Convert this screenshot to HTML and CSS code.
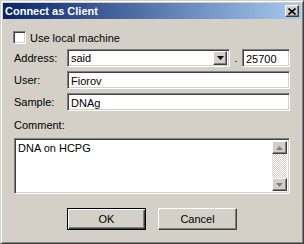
FILE: index.html
```html
<!doctype html>
<html>

<head>
    <meta charset="utf-8" />
    <title>Connect as Client</title>
    <link rel="stylesheet" href="styles.css">
</head>

<body>
    <div class="window">
        <div class="titlebar">
            <span class="title">Connect as Client</span>
            <span class="close raised">
                <svg width="8" height="7" viewBox="0 0 8 7">
                    <path d="M0.5 0.5 L7.5 6.5 M7.5 0.5 L0.5 6.5" stroke="#000" stroke-width="1.6" fill="none" />
                </svg>
            </span>
        </div>
        <div class="content">
            <div class="check-row">
                <span class="checkbox sunken"></span>
                <span>Use local machine</span>
            </div>
            <div class="fields">
                <span class="lbl">Address:</span>
                <div class="addr-row">
                    <div class="combo sunken">
                        <span class="val">said</span>
                        <span class="drop-btn raised">
                            <svg width="7" height="4" viewBox="0 0 7 4">
                                <path d="M0 0 H7 L3.5 4 Z" fill="#000" />
                            </svg>
                        </span>
                    </div>
                    <span class="dot">.</span>
                    <div class="edit sunken port">25700</div>
                </div>
                <span class="lbl">User:</span>
                <div class="edit sunken">Fiorov</div>
                <span class="lbl">Sample:</span>
                <div class="edit sunken">DNAg</div>
            </div>
            <div class="comment-lbl">Comment:</div>
            <div class="memo sunken">
                <div class="memo-text">DNA on HCPG</div>
                <div class="scrollbar">
                    <span class="sb-btn raised">
                        <svg width="7" height="4" viewBox="0 0 7 4">
                            <path d="M0 4 H7 L3.5 0 Z" fill="#808080" />
                        </svg>
                    </span>
                    <span class="sb-track"></span>
                    <span class="sb-btn raised">
                        <svg width="7" height="4" viewBox="0 0 7 4">
                            <path d="M0 0 H7 L3.5 4 Z" fill="#808080" />
                        </svg>
                    </span>
                </div>
            </div>
            <div class="buttons">
                <button class="btn default">OK</button>
                <button class="btn">Cancel</button>
            </div>
        </div>
    </div>
</body>

</html>
```

FILE: styles.css
```css
* {
    box-sizing: border-box;
    font-family: 'Liberation Sans', Arial, sans-serif;
}

html,
body {
    margin: 0;
    padding: 0;
    width: 304px;
    height: 244px;
    background: #d4d0c8;
}

.window {
    width: 304px;
    height: 244px;
    padding: 2px;
    border: 1px solid;
    border-color: #d4d0c8 #404040 #404040 #d4d0c8;
    box-shadow: inset 1px 1px #ffffff, inset -1px -1px #808080;
    background: #d4d0c8;
    display: flex;
    flex-direction: column;
    font-size: 11px;
    color: #000;
}

.raised {
    border: 1px solid;
    border-color: #ffffff #404040 #404040 #ffffff;
    box-shadow: inset -1px -1px #808080;
    background: #d4d0c8;
}

.sunken {
    border: 1px solid;
    border-color: #808080 #ffffff #ffffff #808080;
    box-shadow: inset 1px 1px #404040, inset -1px -1px #d4d0c8;
    background: #ffffff;
}

.titlebar {
    height: 16px;
    display: flex;
    align-items: center;
    justify-content: space-between;
    padding: 0 2px 0 2px;
    background: linear-gradient(to right, #0a246a, #a6caf0);
}

.title {
    color: #ffffff;
    font-weight: bold;
    font-size: 11px;
}

.close {
    width: 14px;
    height: 12px;
    display: flex;
    align-items: center;
    justify-content: center;
}

.content {
    flex: 1;
    padding: 12px 11px 0 11px;
    display: flex;
    flex-direction: column;
}

.check-row {
    height: 13px;
    display: flex;
    align-items: center;
    gap: 4px;
}

.checkbox {
    width: 13px;
    height: 13px;
    margin-left: -1px;
}

.fields {
    margin-top: 5px;
    display: grid;
    grid-template-columns: 53px 223px;
    grid-auto-rows: 18px;
    row-gap: 4px;
    align-items: center;
}

.addr-row {
    display: flex;
    align-items: center;
    height: 18px;
}

.edit {
    height: 18px;
    line-height: 14px;
    padding: 2px 3px;
}

.combo {
    width: 163px;
    height: 18px;
    display: flex;
    align-items: center;
    justify-content: space-between;
    padding: 2px 2px 2px 3px;
}

.drop-btn {
    width: 14px;
    height: 14px;
    display: flex;
    align-items: center;
    justify-content: center;
}

.dot {
    width: 12px;
    text-align: center;
}

.port {
    flex: 1;
}

.comment-lbl {
    margin-top: 8px;
    height: 13px;
    line-height: 13px;
}

.memo {
    margin-top: 6px;
    height: 56px;
    padding: 2px;
    display: flex;
}

.memo-text {
    flex: 1;
    padding: 0 1px;
    line-height: 14px;
}

.scrollbar {
    width: 15px;
    display: flex;
    flex-direction: column;
}

.sb-btn {
    height: 13px;
    display: flex;
    align-items: center;
    justify-content: center;
}

.sb-track {
    flex: 1;
    background: repeating-conic-gradient(#d4d0c8 0 25%, #ffffff 0 50%) 0 0 / 2px 2px;
}

.buttons {
    margin-top: 14px;
    display: flex;
    justify-content: center;
    gap: 12px;
    padding-right: 0;
}

.btn {
    width: 79px;
    height: 22px;
    font-size: 11px;
    color: #000;
    border: 1px solid;
    border-color: #ffffff #404040 #404040 #ffffff;
    box-shadow: inset -1px -1px #808080;
    background: #d4d0c8;
    padding: 0;
}

.btn.default {
    border-color: #000;
    box-shadow: inset 1px 1px #ffffff, inset -1px -1px #404040, inset -2px -2px #808080;
}
```
